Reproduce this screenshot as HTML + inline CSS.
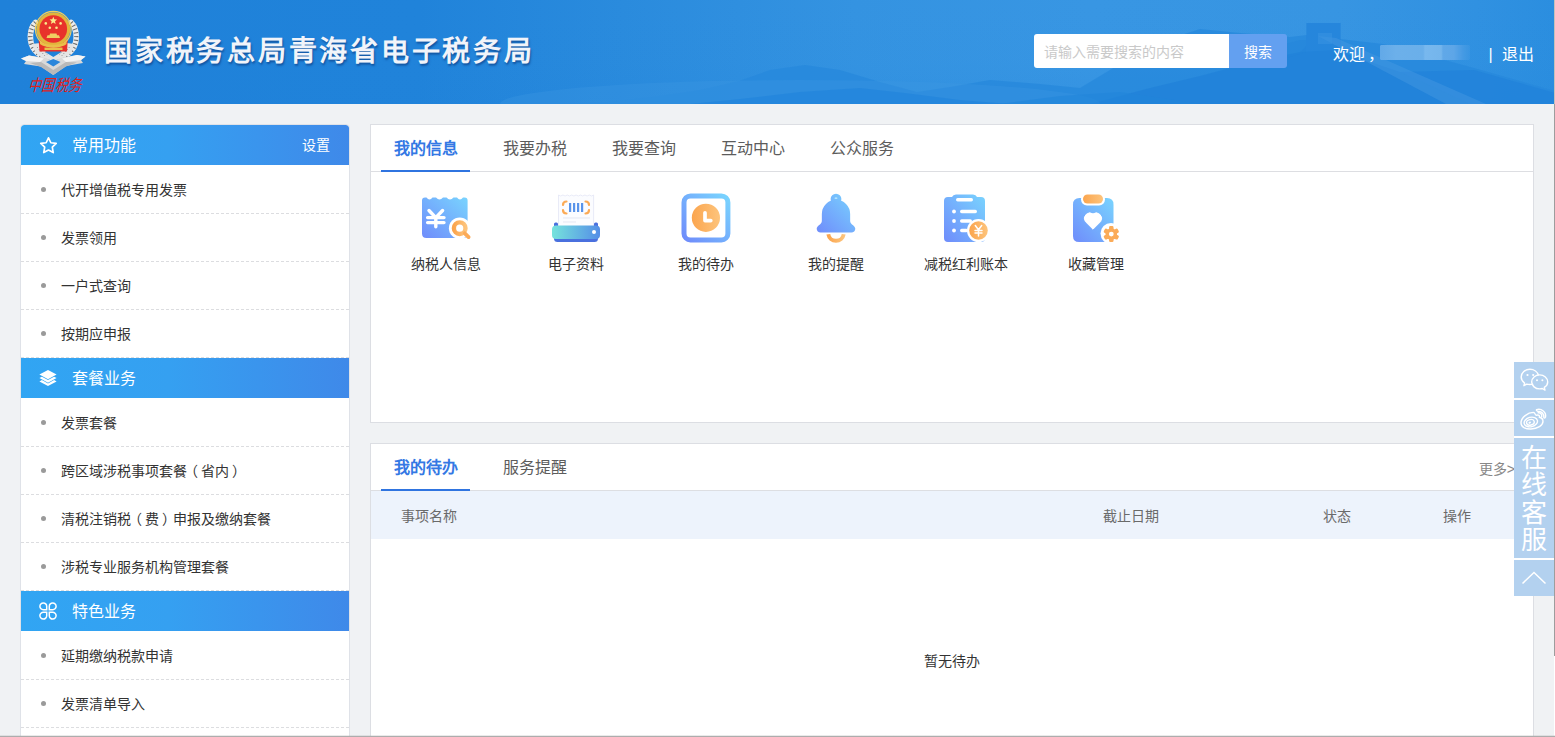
<!DOCTYPE html>
<html lang="zh-CN">
<head>
<meta charset="utf-8">
<title>国家税务总局青海省电子税务局</title>
<style>
*{margin:0;padding:0;box-sizing:border-box;}
html,body{width:1555px;height:737px;overflow:hidden;}
body{background:#f0f2f4;font-family:"Liberation Sans",sans-serif;color:#333;font-size:14px;position:relative;}
.abs{position:absolute;}
/* header */
#hd{position:absolute;left:0;top:0;width:1555px;height:104px;background:#1f81d9;overflow:hidden;}
#hd svg.bg{position:absolute;left:0;top:0;}
#title{position:absolute;left:104px;top:31.500px;font-size:28px;line-height:40px;font-weight:bold;color:#f1f4fa;letter-spacing:2.750px;text-shadow:1px 1.5px 2px rgba(10,55,125,.6);white-space:nowrap;}
#search{position:absolute;left:1034px;top:34px;width:195px;height:34px;background:#fff;border-radius:3px 0 0 3px;color:#c9c9c9;font-size:14px;line-height:36px;padding-left:10px;white-space:nowrap;}
#sbtn{position:absolute;left:1229px;top:34px;width:58px;height:34px;background:#63a0f0;border-radius:0 3px 3px 0;color:#fff;font-size:14px;line-height:36px;text-align:center;}
#welcome{position:absolute;left:1333px;top:43.5px;font-size:16px;line-height:22px;color:#fff;white-space:nowrap;}
#logout{position:absolute;left:1488.5px;top:43.5px;font-size:16px;line-height:22px;color:#fff;white-space:nowrap;}
/* sidebar */
#side{position:absolute;left:20px;top:124px;width:330px;height:620px;background:#fff;border:1px solid #dfe2e8;border-radius:4px 4px 0 0;overflow:hidden;}
.sh{height:40px;background:linear-gradient(90deg,#31a5f3 0%,#35a0f1 45%,#3f89e9 100%);color:#fff;font-size:16px;line-height:42px;padding-left:50.600px;position:relative;white-space:nowrap;}
.sh svg{position:absolute;left:17.600px;top:11px;}
.sh .set{position:absolute;right:19.500px;top:0;font-size:14px;line-height:41px;}
.sl{list-style:none;padding-top:1px;}
.sl li{height:48px;line-height:49px;border-bottom:1px dashed #dcdde0;padding-left:40px;position:relative;font-size:14px;color:#333;white-space:nowrap;}
.sl li:before{content:"";position:absolute;left:20px;top:21px;width:5px;height:5px;border-radius:50%;background:#9a9a9a;}
.pl,.pr{font-style:normal;position:relative;}.pl{left:-3.500px}.pr{left:2.500px}
/* panels */
.panel{position:absolute;background:#fff;border:1px solid #dcdee3;}
.tabs{position:absolute;left:0;top:0;right:0;height:47px;border-bottom:1px solid #dddee2;}
.tab{position:absolute;top:0;width:89px;height:47px;line-height:48px;text-align:center;font-size:16px;color:#5c5c5c;white-space:nowrap;}
.tab.on{color:#3478e4;font-weight:bold;}
.tab.on:after{content:"";position:absolute;left:0;right:0;bottom:0;height:2px;background:#2f74e0;}
.ic{position:absolute;top:68px;width:130px;text-align:center;}
.ic svg{display:block;margin:0 auto;}
.ic span{display:block;margin-top:11px;font-size:14px;line-height:20px;color:#333;white-space:nowrap;}

.more{position:absolute;right:18px;top:0;line-height:50px;font-size:14px;color:#888;white-space:nowrap;}
.th{position:absolute;left:0;right:0;top:47px;height:48px;background:#edf3fc;}
.th span{position:absolute;top:0;line-height:50px;font-size:14px;color:#6a6a6a;white-space:nowrap;}
.empty{position:absolute;left:0;right:0;top:207px;text-align:center;font-size:14px;line-height:20px;color:#333;}
#float{position:absolute;left:1514px;top:362px;width:40px;height:234px;background:#fff;}
#float div{background:#b3d1ef;margin-bottom:2px;position:relative;color:#fff;}
#float .kf{font-size:26px;line-height:27.5px;text-align:center;padding-top:6.500px;height:120px;font-weight:400;text-indent:-.5px;}
#edgeR{position:absolute;left:1554px;top:0;width:1px;height:656px;background:linear-gradient(#c6bfba 0,#c6bfba 104px,#9d9d9d 104px,#9d9d9d 100%);}
#edgeR2{position:absolute;left:1554px;top:656px;width:1px;height:81px;background:#fff;}
#edgeB{position:absolute;left:0;top:735px;width:1555px;height:2px;background:linear-gradient(rgba(170,170,170,.25) 0,rgba(170,170,170,.25) 50%,#adadad 50%,#adadad 100%);}
</style>
</head>
<body>
<div id="hd">
<svg class="bg" width="1555" height="104" viewBox="0 0 1555 104">
<defs>
<linearGradient id="sky" x1="0" y1="0" x2="1" y2="0">
<stop offset="0" stop-color="#1f81d9"/><stop offset=".27" stop-color="#2083da"/><stop offset=".4" stop-color="#2a8bdd"/><stop offset=".55" stop-color="#3493e1"/><stop offset=".7" stop-color="#3896e3"/><stop offset=".86" stop-color="#3795e2"/><stop offset=".95" stop-color="#3091e1"/><stop offset="1" stop-color="#2b8edf"/>
</linearGradient>
<linearGradient id="fade" x1="0" y1="0" x2="0" y2="1">
<stop offset="0" stop-color="#1f81d9" stop-opacity="0"/><stop offset=".6" stop-color="#1f81d9" stop-opacity=".03"/><stop offset="1" stop-color="#1f81d9" stop-opacity=".15"/>
</linearGradient>
</defs>
<rect width="1555" height="104" fill="url(#sky)"/>
<rect width="1555" height="104" fill="url(#fade)"/>
<!-- far ridges -->
<path d="M560 104 L608 102 L660 96 L700 90 L739 81 L770 70 L805 65 L840 70 L880 82 L917 92 L950 87 L990 80 L1040 84 L1080 88 L1120 64 L1160 42 L1200 29 L1240 33 L1290 37 L1307 35 L1307 23 L1340 23 L1340 39 L1383 44 L1430 56 L1474 68 L1555 91 L1555 104 Z" fill="#2788dc" opacity=".8"/>
<path d="M1090 104 L1150 88 L1200 76 L1260 60 L1300 52 L1335 50 L1400 72 L1440 90 L1470 104 Z" fill="#1f80d8" opacity=".7"/>
<path d="M1400 72 L1470 104 L1555 104 L1555 93 L1474 70 Z" fill="#1f80d8" opacity=".55"/>
<path d="M1306 23 H1341 V46 L1360 52 L1300 52 L1306 46 Z" fill="#2384da" opacity=".55"/>
<path d="M1230 62 L1270 48 L1300 40 L1306 40 L1306 52 L1260 66 Z" fill="#2384da" opacity=".35"/>
<path d="M1318 36 L1336 38 L1486 104 L1446 104 Z" fill="#4a9be3" opacity=".42"/>
<rect x="1318" y="33" width="14" height="11" fill="#3a94e1" opacity=".5"/>
<defs><radialGradient id="mist" cx=".5" cy="1" r=".5" gradientTransform="translate(0 0)"><stop offset="0" stop-color="#4aa0e6" stop-opacity=".45"/><stop offset="1" stop-color="#4aa0e6" stop-opacity="0"/></radialGradient></defs>
<ellipse cx="800" cy="104" rx="300" ry="24" fill="#3f99e4" opacity=".32"/>
<path d="M690 104 L740 99 L800 92 L860 88 L905 93 L960 100 L1010 104 Z" fill="#2386dc" opacity=".8"/>
<path d="M1000 104 L1060 96 L1120 92 L1160 98 L1200 104 Z" fill="#2185db" opacity=".6"/>
</svg>
<svg class="bg" width="100" height="104" viewBox="0 0 100 104">
<g fill="none" stroke-linecap="round">
<path d="M35.500 22.500 C29 29 28.500 43 35 50.500 C38 54 41 56 45.500 57.500" stroke="#ececec" stroke-width="5.600"/>
<path d="M71.100 22.500 C77.600 29 78.100 43 71.600 50.500 C68.600 54 65.600 56 61.100 57.500" stroke="#ececec" stroke-width="5.600"/>
<path d="M35.500 22.500 C29 29 28.500 43 35 50.500 C38 54 41 56 45.500 57.500" stroke="#6b6b6b" stroke-width="4.400" stroke-dasharray="1 2.700" stroke-linecap="butt"/>
<path d="M71.100 22.500 C77.600 29 78.100 43 71.600 50.500 C68.600 54 65.600 56 61.100 57.500" stroke="#6b6b6b" stroke-width="4.400" stroke-dasharray="1 2.700" stroke-linecap="butt"/>
</g>
<path d="M32 44 L40 43 L46 52.500 L53.300 57 L60.600 52.500 L66.600 43 L74.600 44 L71 53 L62 59 L53.300 60.500 L44.600 59 L35.600 53 Z" fill="#e4e4e4"/>
<path d="M37 47 L45 56 M40 46 L47.500 55 M69.600 47 L61.600 56 M66.600 46 L59.100 55" stroke="#777" stroke-width=".9" stroke-dasharray="1 1.800" fill="none"/>
<path d="M21 58.500 L29 55.500 L46 58 L53.300 61.500 L60.500 58 L77 55 L85.500 56.500 L81 60 L83 63 L66 66 L53.300 75 L41 66.500 L24 64 L26 61 Z" fill="#d9d9d9"/>
<path d="M30 63 L41 62 L53.300 70 L66 62 L77 62.500 L66 66.500 L53.300 75 L41 67 Z" fill="#b9b9b9"/>
<path d="M21 58.500 L29 55.500 L44 58.500 L40 62 L26 61 Z M85.500 56.500 L77 55 L62 58.500 L66 62 L81 60 Z" fill="#f4f4f4"/>
<path d="M46 62 L53.300 59 L60.500 62 L53.300 66.500 Z" fill="#2a86db"/>
<path d="M38.600 40 L67.800 40 L67 51.600 L39.500 51.600 Z" fill="#e8322b"/>
<circle cx="53.300" cy="29.200" r="17" fill="#e2b53c"/>
<circle cx="53.300" cy="29.200" r="17.800" fill="none" stroke="#f0cf62" stroke-width="1.200"/>
<circle cx="53.300" cy="29" r="13.800" fill="#e8322b"/>
<path d="M40 41 C44 46 62.500 46 66.500 41 L66.500 44 C62 48.500 45 48.500 40 44 Z" fill="#e9c04a"/>
<rect x="44.500" y="47.600" width="18" height="2.400" fill="#e9c04a"/>
<path d="M46.500 38 L47.500 35.200 L49.500 35.200 L50 33.600 L56.500 33.600 L57 35.200 L59 35.200 L60 38 Z" fill="#f0cf62"/>
<path d="M53.300 16.800 l1.050 2.500 2.700 .2 -2.050 1.750 .65 2.650 -2.350 -1.450 -2.350 1.450 .65 -2.650 -2.050 -1.750 2.700 -.2 z" fill="#fbe98a"/>
<circle cx="45.800" cy="23.400" r="1.300" fill="#fbe98a"/><circle cx="49.800" cy="27.800" r="1.300" fill="#fbe98a"/><circle cx="56.500" cy="27.800" r="1.300" fill="#fbe98a"/><circle cx="60.600" cy="23.400" r="1.300" fill="#fbe98a"/>
<text x="0" y="0" text-anchor="middle" font-family="Liberation Serif, serif" font-size="13" font-style="italic" fill="#e0201a" transform="translate(54.500 90.500) scale(1 1.250) skewX(-6)">中国税务</text>
</svg>
<div id="title">国家税务总局青海省电子税务局</div>
<div id="search">请输入需要搜索的内容</div>
<div id="sbtn">搜索</div>
<div id="welcome">欢迎<span style="position:relative;left:2.500px">，</span></div>
<div style="position:absolute;left:1380px;top:45px;width:90px;height:15px;background:linear-gradient(90deg,#62a9e8 0,#6cb0ea 18%,#6aafea 48%,#78b8ee 50%,#74b5ec 68%,#60a8e8 70%,#5aa3e6 100%);opacity:1;border-radius:1px;-webkit-mask-image:linear-gradient(90deg,#000 0,#000 82%,rgba(0,0,0,.5) 92%,rgba(0,0,0,.2) 100%)"></div>
<div id="logout">|&nbsp; 退出</div>
</div>

<div id="side">
<div class="sh" style="border-radius:3px 3px 0 0"><svg width="18" height="18" viewBox="0 0 18 18"><path d="M9 1.5l2.35 4.95 5.35.7-3.9 3.75.95 5.35L9 13.700l-4.750 2.550.95-5.350L1.300 7.150l5.350-.7z" fill="none" stroke="#fff" stroke-width="1.700" stroke-linejoin="round" transform="translate(.5 .3)"/></svg>常用功能<span class="set">设置</span></div>
<ul class="sl"><li>代开增值税专用发票</li><li>发票领用</li><li>一户式查询</li><li>按期应申报</li></ul>
<div class="sh"><svg width="18" height="18" viewBox="0 0 18 18" style="top:11px"><path d="M9 1 L17.600 5.500 L9 10.200 L.4 5.500 Z" fill="#fff"/><path d="M.4 9 L2.900 7.700 L9 11.100 L15.100 7.700 L17.600 9 L9 13.700 Z" fill="#fff"/><path d="M.4 12.400 L2.900 11.100 L9 14.500 L15.100 11.100 L17.600 12.400 L9 17.100 Z" fill="#fff"/></svg>套餐业务</div>
<ul class="sl"><li>发票套餐</li><li>跨区域涉税事项套餐<i class="pl">（</i>省内<i class="pr">）</i></li><li>清税注销税<i class="pl">（</i>费<i class="pr">）</i>申报及缴纳套餐</li><li>涉税专业服务机构管理套餐</li></ul>
<div class="sh"><svg width="18" height="18" viewBox="0 0 18 18" style="top:11px"><g fill="none" stroke="#fff" stroke-width="1.500"><path d="M7.700 7.700 H4.400 A3.400 3.400 0 1 1 7.700 4.300 Z"/><path d="M10.300 7.700 H13.600 A3.400 3.400 0 1 0 10.300 4.300 Z"/><path d="M7.700 10.300 H4.400 A3.400 3.400 0 1 0 7.700 13.700 Z"/><path d="M10.300 10.300 H13.600 A3.400 3.400 0 1 1 10.300 13.700 Z"/></g></svg>特色业务</div>
<ul class="sl"><li>延期缴纳税款申请</li><li>发票清单导入</li><li>&nbsp;</li></ul>
</div>

<div class="panel" id="p1" style="left:370px;top:124px;width:1164px;height:299px;">
<div class="tabs">
<div class="tab on" style="left:10px">我的信息</div>
<div class="tab" style="left:119px">我要办税</div>
<div class="tab" style="left:228px">我要查询</div>
<div class="tab" style="left:337px">互动中心</div>
<div class="tab" style="left:446px">公众服务</div>
</div>

<svg width="0" height="0" style="position:absolute"><defs>
<linearGradient id="gb" x1="0" y1="1" x2="1" y2="0"><stop offset="0" stop-color="#6f8cfb"/><stop offset="1" stop-color="#79d4fe"/></linearGradient>
<linearGradient id="go" x1="0" y1="0" x2="1" y2="0"><stop offset="0" stop-color="#fba54e"/><stop offset="1" stop-color="#fdc47c"/></linearGradient>
<linearGradient id="gp" x1="0" y1="0" x2="1" y2="0"><stop offset="0" stop-color="#76e3dc"/><stop offset="1" stop-color="#548ee7"/></linearGradient>
</defs></svg>
<div class="ic" style="left:10px"><svg width="52" height="50" viewBox="0 0 52 50">
<path d="M2 7.500 Q2 4.400 5 4.400 L6.500 4.400 Q9.500 8.400 12.500 4.400 L16 4.400 Q19.500 8.400 23 4.400 L26.500 4.400 Q30 8.400 33.500 4.400 L37 4.400 Q40 8.400 43 4.400 L44.600 4.400 Q47.600 4.400 47.600 7.500 L47.600 41 Q47.600 45 43.600 45 L6.500 45 Q2 45 2 40.500 Z" fill="url(#gb)"/>
<path d="M9 17.500 L15.800 24.600 L22.600 17.500 M15.800 24.500 V33.800 M7.600 24.600 H24 M7.600 29.600 H24" fill="none" stroke="#fff" stroke-width="3.400" stroke-linecap="round" stroke-linejoin="round"/>
<circle cx="39.700" cy="35.200" r="10.800" fill="#fff"/>
<circle cx="39.700" cy="35.200" r="5.800" fill="none" stroke="url(#go)" stroke-width="4.400"/>
<path d="M44.800 40.300 L48.600 44.100" stroke="#fbab58" stroke-width="3.800" stroke-linecap="round"/>
</svg><span>纳税人信息</span></div>

<div class="ic" style="left:140px"><svg width="52" height="50" viewBox="0 0 52 50">
<path d="M8.5 2 l2.2 1 2.2 -1 2.2 1 2.2 -1 2.2 1 2.2 -1 2.2 1 2.2 -1 2.2 1 2.2 -1 2.2 1 2.2 -1 2.2 1 2.2 -1 2.2 1 2.1 -1 V34 H8.5 Z" fill="#fbfcff" stroke="#dfe3f3" stroke-width=".7"/>
<rect x="19" y="10" width="2.2" height="9" fill="#5a94ea"/><rect x="23" y="10" width="2.2" height="9" fill="#5a94ea"/><rect x="27" y="10" width="2.2" height="9" fill="#5a94ea"/><rect x="31" y="10" width="2.2" height="9" fill="#5a94ea"/>
<path d="M16.500 8.500 Q13 8.500 13 12 M13 17 Q13 20.500 16.500 20.500 M35.500 8.500 Q39 8.500 39 12 M39 17 Q39 20.500 35.500 20.500" fill="none" stroke="#fbaa56" stroke-width="2.200" stroke-linecap="round"/>
<rect x="13" y="24.200" width="27" height="1.500" fill="#eceef7"/><rect x="13" y="28.200" width="13" height="1.500" fill="#eceef7"/>
<rect x="4" y="38" width="44" height="11" rx="3.5" fill="#4a70de"/>
<rect x="4" y="29.5" width="4" height="8" rx="1.5" fill="#4a70de"/><rect x="44" y="29.5" width="4" height="8" rx="1.5" fill="#4a70de"/>
<rect x="2" y="32.5" width="48" height="13.5" rx="4" fill="url(#gp)"/>
<circle cx="44" cy="39" r="2" fill="#fff"/>
</svg><span>电子资料</span></div>

<div class="ic" style="left:270px"><svg width="52" height="50" viewBox="0 0 52 50">
<rect x="4" y="2.900" width="43.900" height="44.100" rx="6.500" fill="#fff" stroke="url(#gb)" stroke-width="5"/>
<circle cx="25.900" cy="24.800" r="14.100" fill="url(#go)"/>
<path d="M25 19.800 V27.600 H30.800" fill="none" stroke="#fff" stroke-width="3.700" stroke-linejoin="round" stroke-linecap="round"/>
</svg><span>我的待办</span></div>

<div class="ic" style="left:400px"><svg width="52" height="50" viewBox="0 0 52 50">
<path d="M18.300 41.200 A7.800 7.800 0 0 0 33.700 41.200" fill="none" stroke="url(#go)" stroke-width="3.900"/>
<path d="M11.850 21 A14.150 14.150 0 0 1 40.150 21 L40.150 28 C40.150 31.500 45.300 32.500 45.300 35.800 C45.300 38 43.600 39.600 41.500 39.600 L10.500 39.600 C8.400 39.600 6.700 38 6.700 35.800 C6.700 32.500 11.850 31.500 11.850 28 Z M26 .7 A5.400 5.400 0 0 1 26 11.500 A5.400 5.400 0 0 1 26 .7 Z" fill="url(#gb)"/>
<rect x="24.600" y="4.500" width="2.800" height="1.300" rx=".65" fill="#c3efff"/>
</svg><span>我的提醒</span></div>

<div class="ic" style="left:530px"><svg width="52" height="50" viewBox="0 0 52 50">
<path d="M4 8 Q4 4 8 4 L12 4 Q13 1.5 16 1.5 L33 1.5 Q36 1.5 37 4 L41 4 Q45 4 45 8 L45 45 Q45 49 41 49 L8 49 Q4 49 4 45 Z" fill="url(#gb)"/>
<rect x="16" y="5" width="17" height="3.4" rx="1.7" fill="#fff"/>
<circle cx="14" cy="18.5" r="1.9" fill="#fff"/><rect x="20" y="16.8" width="17" height="3.4" rx="1.7" fill="#fff"/>
<circle cx="14" cy="28" r="1.9" fill="#fff"/><rect x="20" y="26.3" width="12" height="3.4" rx="1.7" fill="#fff"/>
<circle cx="14" cy="37.5" r="1.9" fill="#fff"/><rect x="20" y="35.8" width="8" height="3.4" rx="1.7" fill="#fff"/>
<circle cx="38.5" cy="37.5" r="11.5" fill="#fff"/>
<circle cx="38.5" cy="37.5" r="9.3" fill="url(#go)"/>
<path d="M35.3 32.5 L38.5 36.8 L41.7 32.5 M38.5 36.8 V43 M35 37.4 H42 M35 40 H42" fill="none" stroke="#fff" stroke-width="1.5" stroke-linecap="round" stroke-linejoin="round"/>
</svg><span>减税红利账本</span></div>

<div class="ic" style="left:660px"><svg width="52" height="50" viewBox="0 0 52 50" style="position:relative;left:-1px">
<path d="M4 11.500 Q4 5 10.500 5 L38 5 Q44.500 5 44.500 11.500 L44.500 43 Q44.500 49 38.500 49 L10 49 Q4 49 4 43 Z" fill="url(#gb)"/>
<rect x="12" y="0" width="24" height="12.5" rx="6" fill="#fff"/>
<rect x="14" y="1.5" width="20" height="9" rx="4.5" fill="url(#go)"/>
<path d="M24 36.200 L16.400 28.600 A5.500 5.500 0 0 1 24 20.900 A5.500 5.500 0 0 1 31.600 28.600 Z" fill="#fff" stroke="#fff" stroke-width="1" stroke-linejoin="round"/>
<circle cx="42" cy="40.5" r="10.5" fill="#fff"/>
<g transform="translate(42.300 41.100) scale(.93)"><g fill="#fbab58">
<rect x="-2.4" y="-8.6" width="4.8" height="17.2" rx="1.4"/>
<rect x="-2.4" y="-8.6" width="4.8" height="17.2" rx="1.4" transform="rotate(60)"/>
<rect x="-2.4" y="-8.6" width="4.8" height="17.2" rx="1.4" transform="rotate(120)"/>
<circle r="6.2"/></g><circle r="2.6" fill="#fff"/></g>
</svg><span>收藏管理</span></div>
</div>

<div class="panel" id="p2" style="left:370px;top:443px;width:1164px;height:300px;">
<div class="tabs">
<div class="tab on" style="left:10px">我的待办</div>
<div class="tab" style="left:119px">服务提醒</div>
</div>

<div class="more">更多&gt;</div>
<div class="th"><span style="left:30px">事项名称</span><span style="left:732px">截止日期</span><span style="left:952px">状态</span><span style="left:1072px">操作</span></div>
<div class="empty">暂无待办</div>
</div>

<div id="float">
<div style="height:36px"><svg width="40" height="36" viewBox="0 0 40 36"><g transform="translate(-.8 -2.600)"><g fill="none" stroke="#fff" stroke-width="1.400" stroke-linejoin="round">
<path transform="translate(3 1.200)" d="M17 23.500 c-1.200 .3 -2.300 .4 -3.500 .4 c-1 0 -2 -.1 -3 -.4 l-2.800 1.600 l.7 -2.700 c-2.200 -1.500 -3.400 -3.500 -3.400 -5.900 c0 -4.300 3.900 -7.800 8.700 -7.800 c4.200 0 7.700 2.600 8.500 6.100"/>
<path d="M34.500 22.500 c0 -3.900 -3.600 -7 -8 -7 s-8 3.100 -8 7 s3.600 7 8 7 c.9 0 1.800 -.1 2.600 -.4 l2.700 1.600 l-.7 -2.700 c2.100 -1.300 3.400 -3.300 3.400 -5.500 z"/></g>
<circle cx="14.300" cy="15.600" r="1.100" fill="#fff"/><circle cx="20" cy="15.600" r="1.100" fill="#fff"/><circle cx="23.800" cy="20.800" r="1" fill="#fff"/><circle cx="29.200" cy="20.800" r="1" fill="#fff"/></g></svg></div>
<div style="height:36px"><svg width="40" height="36" viewBox="0 0 40 36"><g fill="none" stroke="#fff" stroke-width="1.400" stroke-linejoin="round" stroke-linecap="round">
<path d="M19.300 12.400 C14 12.400 7 17.500 7 23 C7 27 11.500 29.200 17 29 C23.500 28.700 29 25.500 29 21.300 C29 19 27.500 17.600 25.300 17.200 C26 15.400 24.800 14.600 22.300 15.200 C21.200 15.500 21.300 12.500 19.300 12.400 Z"/>
<ellipse cx="16.800" cy="22" rx="6.800" ry="4.700" transform="rotate(-14 16.800 22)"/>
<ellipse cx="16.400" cy="22.300" rx="3.900" ry="2.800" transform="rotate(-14 16.400 22.300)"/>
<path d="M22.600 9.600 C27.500 8.200 32.600 12 31.500 17.200 C31.200 18.400 29.800 18.400 29.800 17.200 C30.300 13.800 27.500 11 24.200 11.500 C22.900 11.500 22 10 22.600 9.600 Z"/>
<path d="M24.200 12.800 C26.500 12.500 28.300 14.300 27.700 16.600"/>
</g><ellipse cx="15.700" cy="22.600" rx="1.400" ry=".9" fill="#fff" transform="rotate(-30 15.700 22.600)"/></svg></div>
<div class="kf">在<br>线<br>客<br>服</div>
<div style="height:36px"><svg width="40" height="36" viewBox="0 0 40 36"><path d="M8.500 23.500 L20 12.500 L31.500 23.500" fill="none" stroke="#fff" stroke-width="1.500"/></svg></div>
</div>
<div id="edgeR"></div><div id="edgeR2"></div><div id="edgeB"></div>
</body>
</html>
